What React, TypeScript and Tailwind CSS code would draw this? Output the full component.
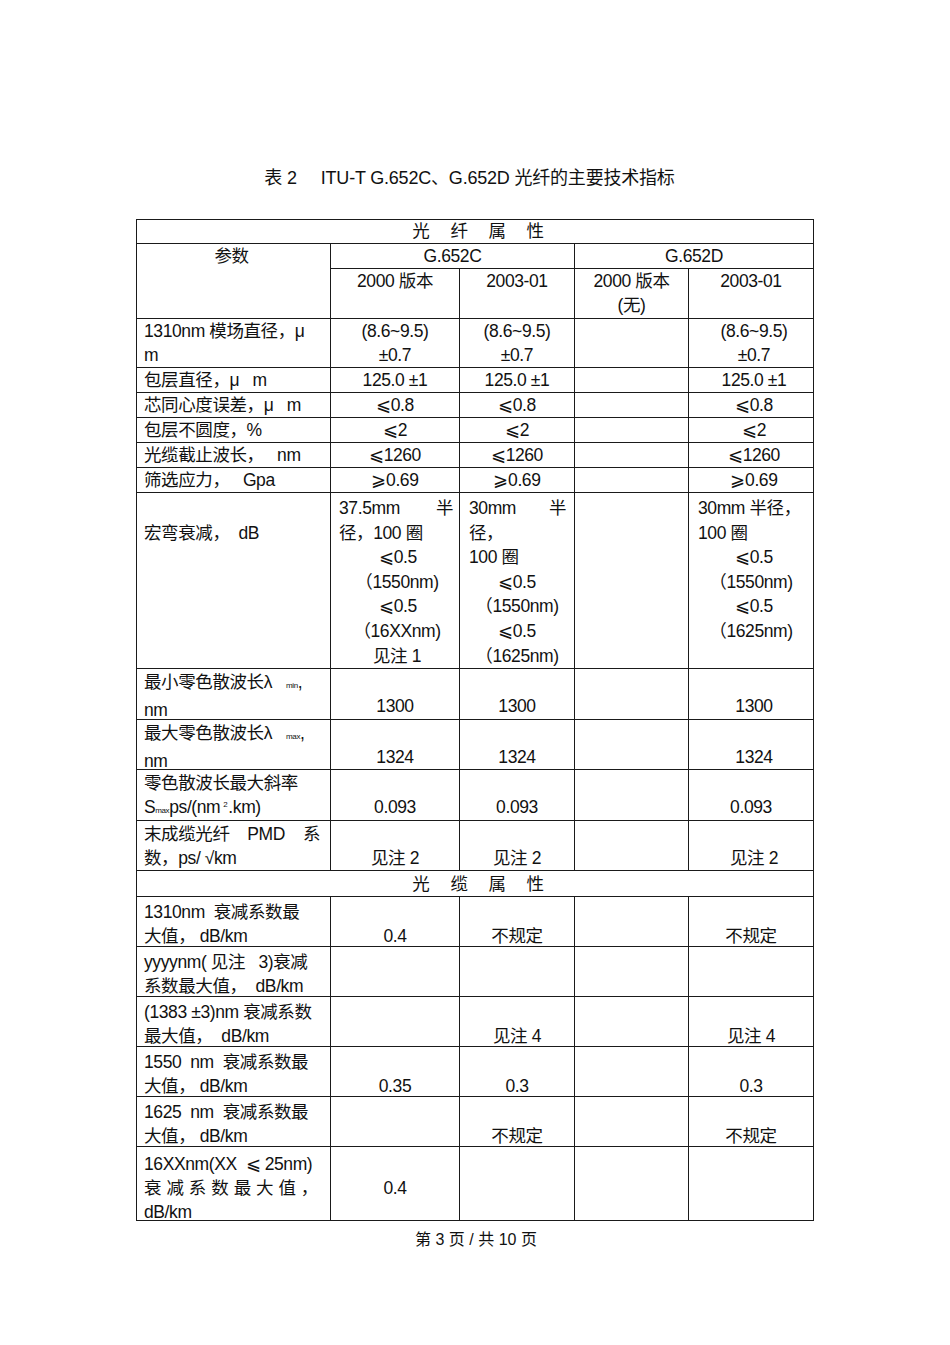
import React from "react";

const F = '"Liberation Sans", "Noto Sans CJK SC", sans-serif';

function Td({
  children,
  left = false,
  className = "",
  pt = "",
  colSpan,
  rowSpan,
}: {
  children?: React.ReactNode;
  left?: boolean;
  className?: string;
  pt?: string;
  colSpan?: number;
  rowSpan?: number;
}) {
  return (
    <td
      colSpan={colSpan}
      rowSpan={rowSpan}
      className={`border border-[#1a1a1a] p-0 align-top ${className}`}
    >
      <div className="h-0 overflow-visible">
        <div
          className={`leading-[24px] whitespace-nowrap ${pt} ${left ? "pl-[7px] text-left" : "text-center"}`}
        >
          {children}
        </div>
      </div>
    </td>
  );
}

const L = ({ children, className = "" }: { children?: React.ReactNode; className?: string }) => (
  <div className={`h-[24.6px] leading-[24.6px] ${className}`}>{children}</div>
);

const LE = "⩽";
const GE = "⩾";

const PU = "pt-[1px]";
const PT = "pt-[3px]";

export default function App() {
  return (
    <div
      className="w-[950px] h-[1345px] bg-white text-[#111] relative"
      style={{ fontFamily: F }}
    >
      <div className="pt-[166px] text-center text-[18px] leading-[24px] pr-[11px] tracking-[-0.2px]">
        表 2&nbsp;&nbsp;&nbsp;&nbsp; ITU-T G.652C、G.652D 光纤的主要技术指标
      </div>
      <table
        className="ml-[136px] mt-[29px] table-fixed border-collapse text-[17.5px] tracking-[-0.4px]"
        style={{ width: 678 }}
      >
        <colgroup>
          <col style={{ width: 194 }} />
          <col style={{ width: 129 }} />
          <col style={{ width: 115 }} />
          <col style={{ width: 114 }} />
          <col style={{ width: 125 }} />
        </colgroup>
        <tbody>
          <tr className="h-[24px]">
            <Td colSpan={5}>
              <div className="flex justify-center gap-[21px] pl-[6px] leading-[23px]">
                <span>光</span>
                <span>纤</span>
                <span>属</span>
                <span>性</span>
              </div>
            </Td>
          </tr>
          <tr className="h-[25px]">
            <Td rowSpan={2}>
              <div className="pr-[4px]">参数</div>
            </Td>
            <Td colSpan={2}>G.652C</Td>
            <Td colSpan={2}>G.652D</Td>
          </tr>
          <tr className="h-[50px]">
            <Td>2000 版本</Td>
            <Td>2003-01</Td>
            <Td>
              2000 版本
              <br />
              (无)
            </Td>
            <Td>2003-01</Td>
          </tr>
          <tr className="h-[49px]">
            <Td left>
              1310nm 模场直径，μ
              <br />m
            </Td>
            <Td>
              (8.6~9.5)
              <br />
              ±0.7
            </Td>
            <Td>
              (8.6~9.5)
              <br />
              ±0.7
            </Td>
            <Td />
            <Td>
              <div className="pl-[6px]">
                (8.6~9.5)
                <br />
                ±0.7
              </div>
            </Td>
          </tr>
          <tr className="h-[25px]">
            <Td left>包层直径，μ&nbsp;&nbsp; m</Td>
            <Td>125.0 ±1</Td>
            <Td>125.0 ±1</Td>
            <Td />
            <Td>
              <div className="pl-[6px]">125.0 ±1</div>
            </Td>
          </tr>
          <tr className="h-[25px]">
            <Td left>芯同心度误差，μ&nbsp;&nbsp; m</Td>
            <Td>{LE}0.8</Td>
            <Td>{LE}0.8</Td>
            <Td />
            <Td>
              <div className="pl-[6px]">{LE}0.8</div>
            </Td>
          </tr>
          <tr className="h-[25px]">
            <Td left>包层不圆度，%</Td>
            <Td>{LE}2</Td>
            <Td>{LE}2</Td>
            <Td />
            <Td>
              <div className="pl-[6px]">{LE}2</div>
            </Td>
          </tr>
          <tr className="h-[25px]">
            <Td left>光缆截止波长，&nbsp;&nbsp; nm</Td>
            <Td>{LE}1260</Td>
            <Td>{LE}1260</Td>
            <Td />
            <Td>
              <div className="pl-[6px]">{LE}1260</div>
            </Td>
          </tr>
          <tr className="h-[25px]">
            <Td left>筛选应力，&nbsp;&nbsp; Gpa</Td>
            <Td>{GE}0.69</Td>
            <Td>{GE}0.69</Td>
            <Td />
            <Td>
              <div className="pl-[6px]">{GE}0.69</div>
            </Td>
          </tr>
          <tr className="h-[176px]">
            <Td left>
              <div className="pt-[3px]">
                <L />
                <L>宏弯衰减，&nbsp;&nbsp;dB</L>
              </div>
            </Td>
            <Td>
              <div className="pt-[3px]">
                <L className="flex justify-between pl-[8px] pr-[6px]">
                  <span>37.5mm</span>
                  <span>半</span>
                </L>
                <L className="text-left pl-[8px]">径，100 圈</L>
                <L className="pl-[6px]">{LE}0.5</L>
                <L className="pl-[4px]">（1550nm)</L>
                <L className="pl-[6px]">{LE}0.5</L>
                <L className="pl-[4px]">（16XXnm)</L>
                <L className="pl-[4px]">见注 1</L>
              </div>
            </Td>
            <Td>
              <div className="pt-[3px]">
                <L className="flex justify-between pl-[9px] pr-[8px]">
                  <span>30mm</span>
                  <span>半</span>
                </L>
                <L className="text-left pl-[9px]">径，</L>
                <L className="text-left pl-[9px]">100 圈</L>
                <L>{LE}0.5</L>
                <L>（1550nm)</L>
                <L>{LE}0.5</L>
                <L>（1625nm)</L>
              </div>
            </Td>
            <Td />
            <Td>
              <div className="pt-[3px]">
                <L className="text-left pl-[9px]">30mm 半径，</L>
                <L className="text-left pl-[9px]">100 圈</L>
                <L className="pl-[6px]">{LE}0.5</L>
                <L>（1550nm)</L>
                <L className="pl-[6px]">{LE}0.5</L>
                <L>（1625nm)</L>
              </div>
            </Td>
          </tr>
          <tr className="h-[51px]">
            <Td left pt={PU}>
              最小零色散波长λ
              <span className="text-[8px] ml-[14px] align-baseline">min</span>,
              <br />
              nm
            </Td>
            <Td pt={PU}>
              <br />
              1300
            </Td>
            <Td pt={PU}>
              <br />
              1300
            </Td>
            <Td />
            <Td pt={PU}>
              <div className="pl-[6px]">
                <br />
                1300
              </div>
            </Td>
          </tr>
          <tr className="h-[50px]">
            <Td left pt={PU}>
              最大零色散波长λ
              <span className="text-[8px] ml-[14px] align-baseline">max</span>,
              <br />
              nm
            </Td>
            <Td pt={PU}>
              <br />
              1324
            </Td>
            <Td pt={PU}>
              <br />
              1324
            </Td>
            <Td />
            <Td pt={PU}>
              <div className="pl-[6px]">
                <br />
                1324
              </div>
            </Td>
          </tr>
          <tr className="h-[51px]">
            <Td left pt={PU}>
              零色散波长最大斜率
              <br />
              S<span className="text-[8px]">max</span>ps/(nm
              <span className="text-[8px] align-top ml-[3px] mr-[1px] relative top-[-2px]">2</span>.km)
            </Td>
            <Td pt={PU}>
              <br />
              0.093
            </Td>
            <Td pt={PU}>
              <br />
              0.093
            </Td>
            <Td />
            <Td pt={PU}>
              <br />
              0.093
            </Td>
          </tr>
          <tr className="h-[50px]">
            <Td left pt={PU}>
              <div className="flex justify-between pr-[10px]">
                <span>末成缆光纤</span>
                <span>PMD</span>
                <span>系</span>
              </div>
              数，ps/ √km
            </Td>
            <Td pt={PU}>
              <br />
              见注 2
            </Td>
            <Td pt={PU}>
              <br />
              见注 2
            </Td>
            <Td />
            <Td pt={PU}>
              <div className="pl-[6px]">
                <br />
                见注 2
              </div>
            </Td>
          </tr>
          <tr className="h-[26px]">
            <Td colSpan={5}>
              <div className="flex justify-center gap-[21px] pl-[6px] pt-[1px]">
                <span>光</span>
                <span>缆</span>
                <span>属</span>
                <span>性</span>
              </div>
            </Td>
          </tr>
          <tr className="h-[50px]">
            <Td left pt={PT}>
              1310nm&nbsp; 衰减系数最
              <br />
              大值，&nbsp;dB/km
            </Td>
            <Td pt={PT}>
              <br />
              0.4
            </Td>
            <Td pt={PT}>
              <br />
              不规定
            </Td>
            <Td />
            <Td pt={PT}>
              <br />
              不规定
            </Td>
          </tr>
          <tr className="h-[50px]">
            <Td left pt={PT}>
              yyyynm( 见注&nbsp;&nbsp; 3)衰减
              <br />
              系数最大值，&nbsp;&nbsp;dB/km
            </Td>
            <Td />
            <Td />
            <Td />
            <Td />
          </tr>
          <tr className="h-[50px]">
            <Td left pt={PT}>
              (1383 ±3)nm 衰减系数
              <br />
              最大值，&nbsp; dB/km
            </Td>
            <Td />
            <Td pt={PT}>
              <br />
              见注 4
            </Td>
            <Td />
            <Td pt={PT}>
              <br />
              见注 4
            </Td>
          </tr>
          <tr className="h-[50px]">
            <Td left pt={PT}>
              1550&nbsp; nm&nbsp; 衰减系数最
              <br />
              大值，&nbsp;dB/km
            </Td>
            <Td pt={PT}>
              <br />
              0.35
            </Td>
            <Td pt={PT}>
              <br />
              0.3
            </Td>
            <Td />
            <Td pt={PT}>
              <br />
              0.3
            </Td>
          </tr>
          <tr className="h-[50px]">
            <Td left pt={PT}>
              1625&nbsp; nm&nbsp; 衰减系数最
              <br />
              大值，&nbsp;dB/km
            </Td>
            <Td />
            <Td pt={PT}>
              <br />
              不规定
            </Td>
            <Td />
            <Td pt={PT}>
              <br />
              不规定
            </Td>
          </tr>
          <tr className="h-[74px]">
            <Td left pt="pt-[5px]">
              16XXnm(XX&nbsp; {LE} 25nm)
              <div className="flex justify-between pr-[12px]">
                {"衰减系数最大值，".split("").map((c, i) => (
                  <span key={i}>{c}</span>
                ))}
              </div>
              dB/km
            </Td>
            <Td pt="pt-[5px]">
              <br />
              0.4
            </Td>
            <Td />
            <Td />
            <Td />
          </tr>
        </tbody>
      </table>
      <div className="mt-[9px] text-center text-[16px] leading-[20px] pl-[2px]">
        第 3 页 / 共 10 页
      </div>
    </div>
  );
}
